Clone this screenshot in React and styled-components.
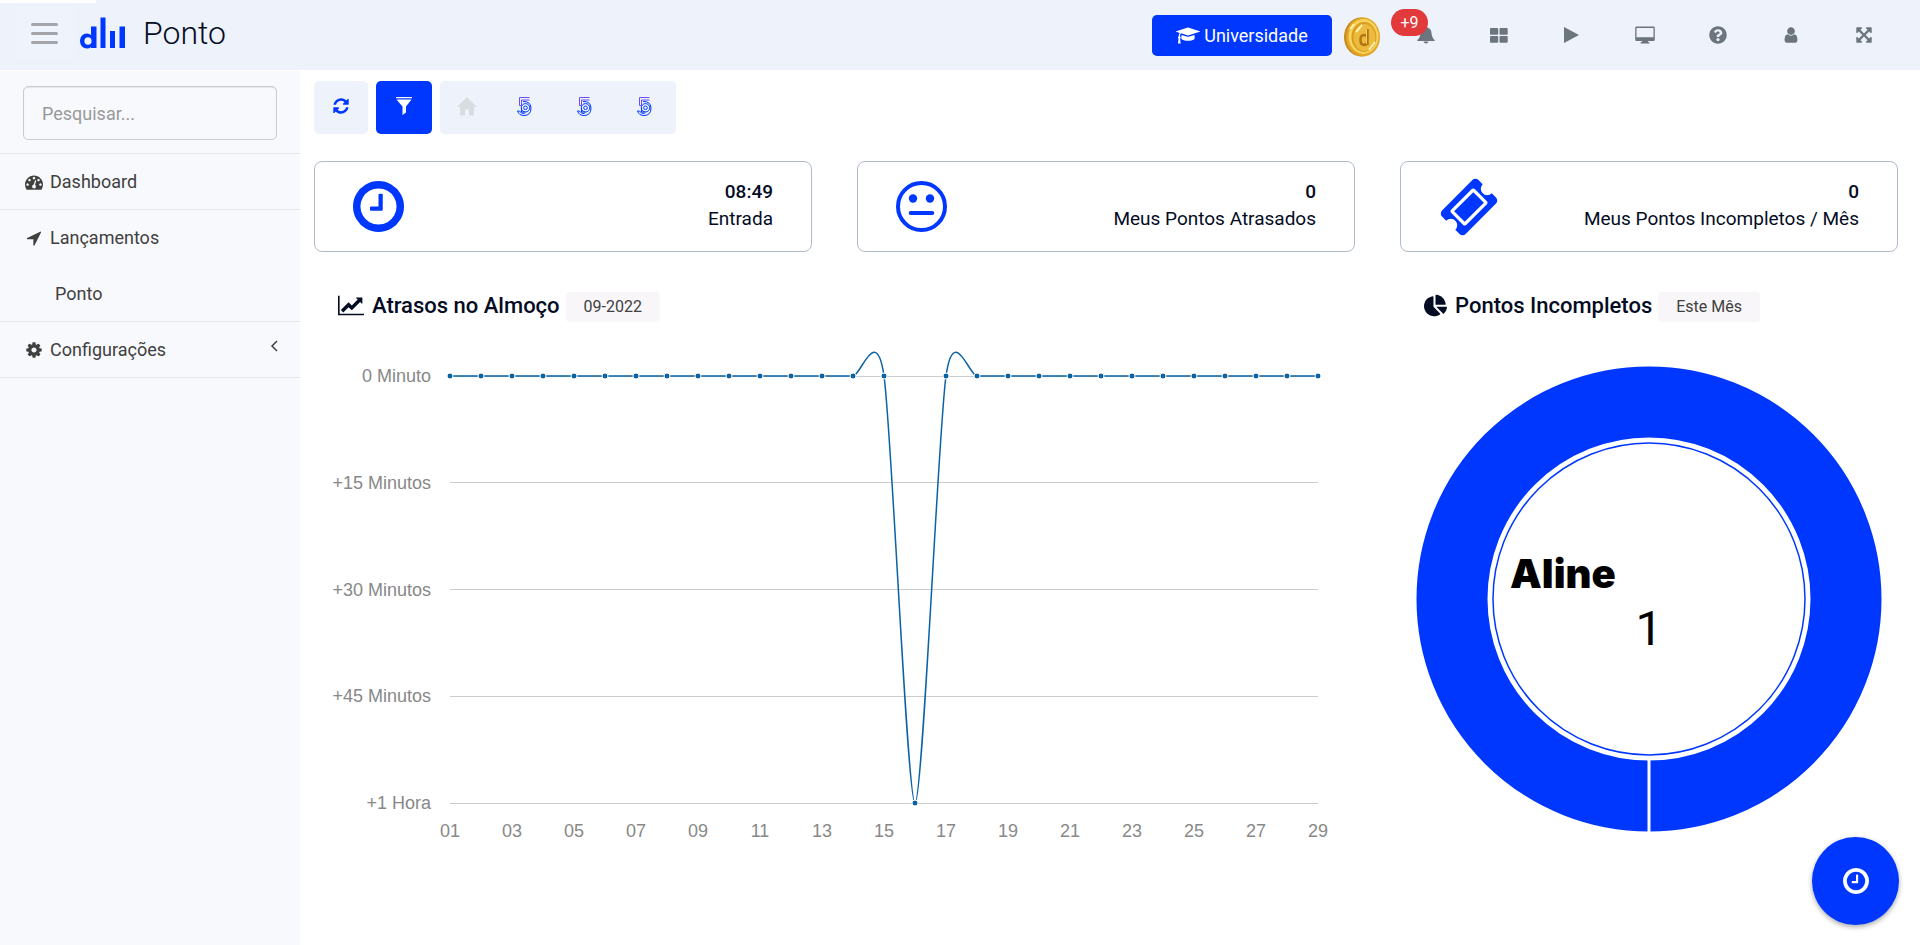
import React from "react"
import styled, { createGlobalStyle, ThemeProvider } from "styled-components"
import { FaChartPie, FaQuestionCircle } from "react-icons/fa"

const theme = {
    fonts: {
        body: "Roboto, \"Open Sans\", sans-serif",
        chart: "\"Liberation Sans\", Arial, sans-serif",
        display: "Inter, \"Liberation Sans\", sans-serif"
    },
    colors: {
        primary: "#0037ff",
        surface: "#edf2fb",
        sidebar: "#f8f9fd",
        text: "#040c24",
        menuText: "#404040",
        muted: "#6c757d",
        danger: "#e23a3a",
        line: "#e3e6ea",
        cardBorder: "#b0bccb",
        chartLine: "#0b62a4",
        chartText: "#888888"
    }
}

const GlobalStyle = createGlobalStyle`
    * {
        box-sizing: border-box;
    }
    body {
        margin: 0;
        background: #ffffff;
        font-family: ${theme.fonts.body};
        font-weight: 400;
        font-size: 18px;
        line-height: 27px;
        color: ${theme.colors.text};
    }
    button, input {
        font: inherit;
    }
    button {
        border: 0;
        padding: 0;
        cursor: pointer;
    }
`

const Page = styled.div`
    display: flex;
    flex-direction: column;
    min-height: 100vh;
`

const Header = styled.header`
    position: relative;
    display: flex;
    align-items: center;
    justify-content: space-between;
    height: 70px;
    padding: 0 20px 0 15px;
    background: ${props => props.theme.colors.surface};
`

const LoadingBar = styled.div`
    position: absolute;
    top: 0;
    left: 0;
    width: 5%;
    height: 3px;
    background: #ffffff;
`

const Brand = styled.div`
    display: flex;
    align-items: center;
    height: 66px;
    align-self: flex-start;
`

const MenuButton = styled.button`
    display: flex;
    flex-direction: column;
    align-items: center;
    justify-content: center;
    gap: 6px;
    width: 59px;
    height: 52px;
    margin-right: 6px;
    background: #eff3fb;
`

const MenuBar = styled.span`
    width: 27px;
    height: 3px;
    border-radius: 2px;
    background: #a3a5ab;
`

const BrandLink = styled.a`
    display: flex;
    align-items: center;
    gap: 17px;
    color: ${props => props.theme.colors.text};
    text-decoration: none;
`

const BrandTitle = styled.h1`
    margin: 0;
    font-size: 32px;
    font-weight: 300;
    line-height: 40px;
`

const HeaderActions = styled.nav`
    display: flex;
    align-items: center;
`

const UniversityButton = styled.button`
    display: flex;
    align-items: center;
    justify-content: center;
    gap: 4px;
    width: 180px;
    height: 41px;
    margin-right: 12px;
    border-radius: 5px;
    background: ${props => props.theme.colors.primary};
    color: #ffffff;
`

const CoinButton = styled.button`
    display: flex;
    margin: 4px 9px 0 0;
    background: none;
`

const ActionButton = styled.button`
    position: relative;
    display: flex;
    align-items: center;
    justify-content: center;
    width: 73px;
    height: 52px;
    background: none;
    color: ${props => props.theme.colors.muted};
`

const Counter = styled.span`
    position: absolute;
    top: 0;
    left: 2px;
    width: 37px;
    height: 27px;
    border-radius: 14px;
    background: ${props => props.theme.colors.danger};
    color: #ffffff;
    font-size: 16px;
    line-height: 27px;
    text-align: center;
`

const Body = styled.div`
    display: flex;
    flex: 1;
    margin-top: 1px;
`

const Sidebar = styled.aside`
    flex: none;
    width: 300px;
    background: ${props => props.theme.colors.sidebar};
`

const SearchForm = styled.form`
    padding: 15px 23px 13px;
    border-bottom: 1px solid ${props => props.theme.colors.line};
`

const SearchInput = styled.input`
    display: block;
    width: 100%;
    height: 54px;
    padding: 0 18px;
    border: 1px solid #cccccc;
    border-radius: 5px;
    background: transparent;
    box-shadow: inset 0 1px 1px rgba(0, 0, 0, 0.08);
    color: ${props => props.theme.colors.menuText};
    &::placeholder {
        color: #999999;
        font-weight: 400;
        opacity: 1;
    }
`

const Menu = styled.ul`
    margin: 0;
    padding: 0;
    list-style: none;
`

const MenuItem = styled.li`
    border-bottom: 1px solid ${props => props.theme.colors.line};
`

const MenuLink = styled.a`
    display: flex;
    align-items: center;
    gap: 7px;
    height: ${props => props.$nested ? 56 : 55}px;
    padding: 0 20px 0 ${props => props.$nested ? 55 : 25}px;
    color: ${props => props.theme.colors.menuText};
    text-decoration: none;
`

const MenuIcon = styled.span`
    display: flex;
    justify-content: center;
    width: 18px;
`

const MenuArrow = styled.span`
    display: flex;
    margin-left: auto;
    padding-bottom: 8px;
`

const Main = styled.main`
    flex: 1;
    min-width: 0;
    padding: 10px 22px 24px 14px;
`

const Toolbar = styled.div`
    display: flex;
    gap: 8px;
`

const ToolButton = styled.button`
    display: flex;
    align-items: center;
    justify-content: center;
    width: ${props => props.$width || 60}px;
    height: 53px;
    padding-bottom: 3px;
    border-radius: 5px;
    background: ${props => props.$primary ? props.theme.colors.primary : props.theme.colors.surface};
    color: ${props => props.$primary ? "#ffffff" : props.theme.colors.primary};
    &:disabled {
        color: #d7dde1;
        cursor: default;
    }
`

const ToolGroup = styled.div`
    display: flex;
    padding-right: 2px;
    border-radius: 5px;
    background: ${props => props.theme.colors.surface};
`

const Columns = styled.div`
    display: grid;
    grid-template-columns: repeat(3, minmax(0, 1fr));
    column-gap: 45px;
    row-gap: 37px;
    margin-top: 27px;
`

const StatCard = styled.section`
    display: flex;
    align-items: center;
    justify-content: space-between;
    height: 91px;
    padding: 0 38px;
    border: 1px solid ${props => props.theme.colors.cardBorder};
    border-radius: 8px;
    color: ${props => props.theme.colors.primary};
`

const StatText = styled.div`
    padding-bottom: 4px;
    color: ${props => props.theme.colors.text};
    font-size: 19px;
    text-align: right;
`

const StatValue = styled.div`
    font-weight: 500;
`

const Panel = styled.section`
    grid-column: span ${props => props.$span || 1};
`

const PanelHeader = styled.header`
    display: flex;
    align-items: center;
    height: 33px;
    margin-bottom: 18px;
    padding-left: 24px;
`

const PanelTitle = styled.h2`
    margin: 0 6px 0 8px;
    font-size: 22px;
    font-weight: 500;
    line-height: 30px;
`

const Period = styled.span`
    align-self: flex-end;
    padding: 0 18px;
    border-radius: 4px;
    background: #f8f6f8;
    color: #404040;
    font-size: 16px;
    line-height: 30px;
`

const ChartSvg = styled.svg`
    display: block;
    width: 100%;
    height: auto;
    font-family: ${props => props.theme.fonts.chart};
    font-size: 18px;
    font-weight: 400;
`

const FloatingButton = styled.button`
    position: fixed;
    right: 21px;
    bottom: 20px;
    display: flex;
    align-items: center;
    justify-content: center;
    width: 87px;
    height: 88px;
    border-radius: 50%;
    background: ${props => props.theme.colors.primary};
    color: #ffffff;
    box-shadow: 0 2px 5px rgba(0, 0, 0, 0.35);
`

const paths = {
    clock: "M1024 544v448q0 14-9 23t-23 9h-320q-14 0-23-9t-9-23v-64q0-14 9-23t23-9h224v-352q0-14 9-23t23-9h64q14 0 23 9t9 23zm416 352q0-148-73-273t-198-198-273-73-273 73-198 198-73 273 73 273 198 198 273 73 273-73 198-198 73-273zm224 0q0 209-103 385.5t-279.5 279.5-385.5 103-385.5-103-279.5-279.5-103-385.5 103-385.5 279.5-279.5 385.5-103 385.5 103 279.5 279.5 103 385.5z",
    cog: "M1152 896q0-106-75-181t-181-75-181 75-75 181 75 181 181 75 181-75 75-181zm512-109v222q0 12-8 23t-20 13l-185 28q-19 54-39 91 35 50 107 138 10 12 10 25t-9 23q-27 37-99 108t-94 71q-12 0-26-9l-138-108q-44 23-91 38-16 136-29 186-7 28-36 28h-222q-14 0-24.5-8.5t-11.5-21.5l-28-184q-49-16-90-37l-141 107q-10 9-25 9-14 0-25-11-126-114-165-168-7-10-7-23 0-12 8-23 15-21 51-66.5t54-70.5q-27-50-41-99l-183-27q-13-2-21-12.5t-8-23.5v-222q0-12 8-23t19-13l186-28q14-46 39-92-40-57-107-138-10-12-10-24 0-10 9-23 26-36 98.5-107.5t94.5-71.5q13 0 26 10l138 107q44-23 91-38 16-136 29-186 7-28 36-28h222q14 0 24.5 8.5t11.5 21.5l28 184q49 16 90 37l142-107q9-9 24-9 13 0 25 10 129 119 165 170 7 8 7 22 0 12-8 23-15 21-51 66.5t-54 70.5q26 50 41 98l183 28q13 2 21 12.5t8 23.5z",
    dashboard: "M384 1152q0-53-37.5-90.5t-90.5-37.5-90.5 37.5-37.5 90.5 37.5 90.5 90.5 37.5 90.5-37.5 37.5-90.5zm192-448q0-53-37.5-90.5t-90.5-37.5-90.5 37.5-37.5 90.5 37.5 90.5 90.5 37.5 90.5-37.5 37.5-90.5zm428 481l101-382q6-26-7.5-48.5t-38.5-29.5-48 6.5-30 39.5l-101 382q-60 5-107 43.5t-63 98.5q-20 77 20 146t117 89 146-20 89-117q16-60-6-117t-72-91zm660-33q0-53-37.5-90.5t-90.5-37.5-90.5 37.5-37.5 90.5 37.5 90.5 90.5 37.5 90.5-37.5 37.5-90.5zm-640-640q0-53-37.5-90.5t-90.5-37.5-90.5 37.5-37.5 90.5 37.5 90.5 90.5 37.5 90.5-37.5 37.5-90.5zm448 192q0-53-37.5-90.5t-90.5-37.5-90.5 37.5-37.5 90.5 37.5 90.5 90.5 37.5 90.5-37.5 37.5-90.5zm320 448q0 261-141 483-19 29-54 29h-1402q-35 0-54-29-141-221-141-483 0-182 71-348t191-286 286-191 348-71 348 71 286 191 191 286 71 348z",
    arrow: "M1593 349l-640 1280q-17 35-57 35-5 0-15-2-22-5-35.5-22.5t-13.5-39.5v-576h-576q-22 0-39.5-13.5t-22.5-35.5 4-42 29-30l1280-640q13-7 29-7 27 0 45 19 15 14 18.5 34.5t-6.5 39.5z",
    refresh: "M1639 1056q0 5-1 7-64 268-268 434.5t-478 166.5q-146 0-282.5-55t-243.5-157l-129 129q-19 19-45 19t-45-19-19-45v-448q0-26 19-45t45-19h448q26 0 45 19t19 45-19 45l-137 137q71 66 161 102t187 36q134 0 250-65t186-179q11-17 53-117 8-23 30-23h192q13 0 22.5 9.5t9.5 22.5zm25-800v448q0 26-19 45t-45 19h-448q-26 0-45-19t-19-45 19-45l138-138q-148-137-349-137-134 0-250 65t-186 179q-11 17-53 117-8 23-30 23h-199q-13 0-22.5-9.5t-9.5-22.5v-7q65-268 270-434.5t480-166.5q146 0 284 55.5t245 156.5l130-129q19-19 45-19t45 19 19 45z",
    ticket: "M1024 452l316 316-572 572-316-316zm-211 979l618-618q19-19 19-45t-19-45l-362-362q-18-18-45-18t-45 18l-618 618q-19 19-19 45t19 45l362 362q18 18 45 18t45-18zm889-637l-907 908q-37 37-90.5 37t-90.5-37l-126-126q56-56 56-136t-56-136-136-56-136 56l-125-126q-37-37-37-90.5t37-90.5l907-906q37-37 90.5-37t90.5 37l125 125q-56 56-56 136t56 136 136 56 136-56l126 125q37 37 37 90.5t-37 90.5z",
    graduation: "M1774 836l18 316q4 69-82 128t-235 93.5-323 34.5-323-34.5-235-93.5-82-128l18-316 574 181q22 7 48 7t48-7zm530-324q0 23-22 31l-1120 352q-4 1-10 1t-10-1l-652-206q-43 34-71 111.5t-34 178.5q63 36 63 109 0 69-58 107l58 433q2 14-8 25-9 11-24 11h-192q-15 0-24-11-10-11-8-25l58-433q-58-38-58-107 0-73 65-111 11-207 98-330l-333-104q-22-8-22-31t22-31l1120-352q4-1 10-1t10 1l1120 352q22 8 22 31z",
    user: "M1536 1399q0 109-62.5 187t-150.5 78h-854q-88 0-150.5-78t-62.5-187q0-85 8.5-160.5t31.5-152 58.5-131 94-89 134.5-34.5q131 128 313 128t313-128q76 0 134.5 34.5t94 89 58.5 131 31.5 152 8.5 160.5zm-256-887q0 159-112.5 271.5t-271.5 112.5-271.5-112.5-112.5-271.5 112.5-271.5 271.5-112.5 271.5 112.5 112.5 271.5z",
    expand: "M1411 541l-355 355 355 355 144-144q29-31 70-14 39 17 39 59v448q0 26-19 45t-45 19h-448q-42 0-59-40-17-39 14-69l144-144-355-355-355 355 144 144q31 30 14 69-17 40-59 40h-448q-26 0-45-19t-19-45v-448q0-42 40-59 39-17 69 14l144 144 355-355-355-355-144 144q-19 19-45 19-12 0-24-5-40-17-40-59v-448q0-26 19-45t45-19h448q42 0 59 40 17 39-14 69l-144 144 355 355 355-355-144-144q-31-30-14-69 17-40 59-40h448q26 0 45 19t19 45v448q0 42-39 59-13 5-25 5-26 0-45-19z",
    lineChart: "M2048 1536v128h-2048v-1536h128v1408h1920zm-128-1248v435q0 21-19.5 29.5t-35.5-7.5l-121-121-633 633q-10 10-23 10t-23-10l-233-233-416 416-192-192 585-585q10-10 23-10t23 10l233 233 464-464-121-121q-16-16-7.5-35.5t29.5-19.5h435q14 0 23 9t9 23z"
}

const Glyph = ({ name, size, box = "0 0 1792 1792" }) => {
    const [, , w, h] = box.split(" ").map(Number)
    return (
        <svg width={Math.round(size * w / h)} height={size} viewBox={box} fill="currentColor" aria-hidden="true">
            <path d={paths[name]}/>
        </svg>
    )
}

const Logo = () => (
    <svg width="46" height="32" viewBox="0 0 46 32" fill={theme.colors.primary} role="img" aria-label="Logo">
        <path fillRule="evenodd" d="M11 9.500h5.500v21.500h-5.500v-1q-1.500 1.500-4 1.500q-3 0-5-2.100t-2-5.400t2-5.400t5-2.100q2.500 0 4 1.500zM8 20.200q-3.600 0-3.600 3.800t3.600 3.800t3.600-3.800t-3.600-3.800z"/>
        <path d="M20.500 0.500h5v30.500h-5zM30 14h5v17h-5zM39.500 9.500h5.500v21.500h-5.500z"/>
    </svg>
)

const Coin = () => (
    <svg width="36" height="40" viewBox="0 0 36 40" aria-hidden="true">
        <ellipse cx="17" cy="20" rx="17" ry="19.500" fill="#c58a1c"/>
        <ellipse cx="19" cy="20" rx="17" ry="19.500" fill="#e2a526"/>
        <ellipse cx="19.500" cy="19.500" rx="15" ry="17.500" fill="#f6d35a"/>
        <ellipse cx="20" cy="20" rx="12.500" ry="15" fill="#d99a22"/>
        <ellipse cx="20.500" cy="20.500" rx="11" ry="13.500" fill="#ecba3c"/>
        <path d="M12 15l6-7M25 33l6-8M6 12l4-5" stroke="#fff2b0" strokeWidth="2"/>
        <path d="M23.500 12v16M23.500 21q-1-3-3.500-3q-3.500 0-3.500 5t3.500 5q2.500 0 3.500-3" fill="none" stroke="#b47414" strokeWidth="2.500"/>
        <path d="M22.500 12v15" stroke="#f3cf5c" strokeWidth="1"/>
    </svg>
)

const Bell = () => (
    <svg width="18" height="18" viewBox="0 0 18 18" fill="currentColor" aria-hidden="true">
        <path d="M9 0q1.300 0 1.300 1.500q3.900 1 4.200 5.500q.2 4.500 3.200 7v.9h-17.400v-.9q3-2.500 3.200-7q.3-4.500 4.200-5.500q0-1.500 1.300-1.500zM6.500 15.500h5q-.5 2-2.500 2t-2.500-2z"/>
    </svg>
)

const Grid = () => (
    <svg width="18" height="15" viewBox="0 0 18 15" fill="currentColor" aria-hidden="true">
        <rect width="8.200" height="6.800" rx="1"/>
        <rect x="9.500" width="8.200" height="6.800" rx="1"/>
        <rect y="8" width="8.200" height="6.800" rx="1"/>
        <rect x="9.500" y="8" width="8.200" height="6.800" rx="1"/>
    </svg>
)

const Play = () => (
    <svg width="15" height="16" viewBox="0 0 15 16" fill="currentColor" aria-hidden="true">
        <path d="M0 0l15 8l-15 8z"/>
    </svg>
)

const Desktop = () => (
    <svg width="20" height="18" viewBox="0 0 20 18" fill="currentColor" aria-hidden="true">
        <path fillRule="evenodd" d="M1.500 0.500h17q1.300 0 1.300 1.300v12q0 1.200-1.300 1.200h-5.500v1h1.300v1.500h-8.600v-1.500h1.300v-1h-5.500q-1.300 0-1.300-1.200v-12q0-1.300 1.300-1.300zM1.500 1.900v9.300h17v-9.300z"/>
    </svg>
)

const Funnel = () => (
    <svg width="16" height="18" viewBox="0 0 16 18" fill="currentColor" aria-hidden="true">
        <path d="M0 0h16v1.300h-16zM0.500 2.500h15l-5.500 7v6l-3.500 2.500v-8.500z"/>
    </svg>
)

const Home = () => (
    <svg width="20" height="19" viewBox="0 0 20 19" fill="currentColor" aria-hidden="true">
        <path d="M10 0l10 10h-3v8.500h-5v-6h-4v6h-5v-8.500h-3z"/>
    </svg>
)

// figure five with concentric outlines
const Five = () => (
    <svg width="15" height="19" viewBox="0 0 15 19" fill="none" stroke="currentColor" aria-hidden="true">
        <path d="M12.500 0.500h-10v8h2v-5.500h8" stroke="#6a4df7"/>
        <path d="M6 4.500q7.500-.5 8 6.500q0 7.500-7 7.500q-5 0-6.500-4.500h2q1.500 3 5 2.500"/>
        <circle cx="8.500" cy="10.800" r="4.200"/>
        <circle cx="8.500" cy="10.800" r="1.800"/>
        <path d="M4.500 10.500v4.500h4"/>
    </svg>
)

const Meh = () => (
    <svg width="51" height="51" viewBox="0 0 51 51" fill="currentColor" aria-hidden="true">
        <circle cx="25.500" cy="25.500" r="23.500" fill="none" stroke="currentColor" strokeWidth="4"/>
        <circle cx="17" cy="17.500" r="4.200"/>
        <circle cx="34" cy="17.500" r="4.200"/>
        <rect x="12.700" y="30" width="25.600" height="4" rx="2"/>
    </svg>
)

const stats = [
    { icon: <Glyph name="clock" size={51} box="128 128 1536 1536"/>, value: "08:49", label: "Entrada" },
    { icon: <Meh/>, value: "0", label: "Meus Pontos Atrasados" },
    { icon: <Glyph name="ticket" size={60}/>, value: "0", label: "Meus Pontos Incompletos / Mês" }
]

const actions = [
    { label: "Módulos", icon: <Grid/> },
    { label: "Reproduzir", icon: <Play/> },
    { label: "Tela", icon: <Desktop/> },
    { label: "Ajuda", icon: <FaQuestionCircle size={18}/> },
    { label: "Usuário", icon: <Glyph name="user" size={18}/> },
    { label: "Tela cheia", icon: <Glyph name="expand" size={18}/> }
]

const delays = Array.from({ length: 29 }, (_, i) => i === 15 ? 60 : 0)
const ticks = ["0 Minuto", "+15 Minutos", "+30 Minutos", "+45 Minutos", "+1 Hora"]

const plot = { left: 136, top: 36, width: 868, height: 427 }
const stepX = plot.width / (delays.length - 1)
const pointAt = i => [plot.left + i * stepX, plot.top + delays[i] / 60 * plot.height]

const smoothPath = () => {
    const last = delays.length - 1
    const tangent = i => {
        const [x0, y0] = pointAt(Math.max(i - 1, 0))
        const [x1, y1] = pointAt(Math.min(i + 1, last))
        return [(x1 - x0) / 8, (y1 - y0) / 8]
    }
    return delays.map((_, i) => {
        const [x, y] = pointAt(i)
        if (i === 0) return `M${x} ${y}`
        const [px, py] = pointAt(i - 1)
        const [ax, ay] = tangent(i - 1)
        const [bx, by] = tangent(i)
        return `C${px + ax} ${py + ay} ${x - bx} ${y - by} ${x} ${y}`
    }).join("")
}

const DelayChart = () => (
    <ChartSvg viewBox="0 0 1041 520" role="img" aria-label="Atrasos no Almoço">
        {ticks.map((tick, i) => {
            const y = plot.top + i * plot.height / 4
            return (
                <g key={tick}>
                    <line x1={plot.left} x2={plot.left + plot.width} y1={y} y2={y} stroke="#cccccc" shapeRendering="crispEdges"/>
                    <text x="117" y={y + 6} textAnchor="end" fill={theme.colors.chartText}>{tick}</text>
                </g>
            )
        })}
        <path d={smoothPath()} fill="none" stroke={theme.colors.chartLine} strokeWidth="1.5"/>
        {delays.map((_, i) => {
            const [x, y] = pointAt(i)
            return <circle key={i} cx={x} cy={y} r="3" fill={theme.colors.chartLine} stroke="#ffffff"/>
        })}
        {delays.map((_, i) => i % 2 === 0 && (
            <text key={i} x={pointAt(i)[0]} y="497" textAnchor="middle" fill={theme.colors.chartText}>
                {String(i + 1).padStart(2, "0")}
            </text>
        ))}
    </ChartSvg>
)

const DonutChart = () => (
    <ChartSvg viewBox="0 0 498 520" role="img" aria-label="Pontos Incompletos">
        <circle cx="249" cy="259" r="197" fill="none" stroke={theme.colors.primary} strokeWidth="71"/>
        <circle cx="249" cy="259" r="156" fill="none" stroke={theme.colors.primary} strokeWidth="1.5"/>
        <line x1="249" x2="249" y1="419" y2="495" stroke="#ffffff" strokeWidth="3"/>
        <text x="110" y="248" fontFamily={theme.fonts.display} fontSize="40" fontWeight="900" fill="#000000">Aline</text>
        <text x="249" y="305" textAnchor="middle" fontFamily={theme.fonts.body} fontSize="48" fill="#000000">1</text>
    </ChartSvg>
)

const App = () => (
    <ThemeProvider theme={theme}>
        <GlobalStyle/>
        <Page>
            <Header>
                <LoadingBar/>
                <Brand>
                    <MenuButton type="button" aria-label="Menu">
                        <MenuBar/>
                        <MenuBar/>
                        <MenuBar/>
                    </MenuButton>
                    <BrandLink href="#">
                        <Logo/>
                        <BrandTitle>Ponto</BrandTitle>
                    </BrandLink>
                </Brand>
                <HeaderActions>
                    <UniversityButton type="button">
                        <Glyph name="graduation" size={19} box="0 0 2304 1792"/>
                        Universidade
                    </UniversityButton>
                    <CoinButton type="button" aria-label="Moedas"><Coin/></CoinButton>
                    <ActionButton type="button" aria-label="Notificações">
                        <Bell/>
                        <Counter>+9</Counter>
                    </ActionButton>
                    {actions.map(action => (
                        <ActionButton key={action.label} type="button" aria-label={action.label}>
                            {action.icon}
                        </ActionButton>
                    ))}
                </HeaderActions>
            </Header>
            <Body>
                <Sidebar>
                    <SearchForm>
                        <SearchInput type="text" placeholder="Pesquisar..." aria-label="Pesquisar"/>
                    </SearchForm>
                    <Menu>
                        <MenuItem>
                            <MenuLink href="#">
                                <MenuIcon><Glyph name="dashboard" size={18}/></MenuIcon>
                                Dashboard
                            </MenuLink>
                        </MenuItem>
                        <MenuItem>
                            <MenuLink href="#">
                                <MenuIcon><Glyph name="arrow" size={18}/></MenuIcon>
                                Lançamentos
                            </MenuLink>
                            <MenuLink href="#" $nested>Ponto</MenuLink>
                        </MenuItem>
                        <MenuItem>
                            <MenuLink href="#">
                                <MenuIcon><Glyph name="cog" size={18}/></MenuIcon>
                                Configurações
                                <MenuArrow>
                                    <svg width="10" height="12" viewBox="0 0 10 12" fill="none" stroke="currentColor" strokeWidth="1.5" aria-hidden="true">
                                        <path d="M7 1l-5 5l5 5"/>
                                    </svg>
                                </MenuArrow>
                            </MenuLink>
                        </MenuItem>
                    </Menu>
                </Sidebar>
                <Main>
                    <Toolbar>
                        <ToolButton type="button" $width={54} aria-label="Atualizar"><Glyph name="refresh" size={18}/></ToolButton>
                        <ToolButton type="button" $width={56} $primary aria-label="Filtrar"><Funnel/></ToolButton>
                        <ToolGroup>
                            <ToolButton type="button" $width={54} disabled aria-label="Início"><Home/></ToolButton>
                            <ToolButton type="button" aria-label="Painel 1"><Five/></ToolButton>
                            <ToolButton type="button" aria-label="Painel 2"><Five/></ToolButton>
                            <ToolButton type="button" aria-label="Painel 3"><Five/></ToolButton>
                        </ToolGroup>
                    </Toolbar>
                    <Columns>
                        {stats.map(stat => (
                            <StatCard key={stat.label}>
                                {stat.icon}
                                <StatText>
                                    <StatValue>{stat.value}</StatValue>
                                    <div>{stat.label}</div>
                                </StatText>
                            </StatCard>
                        ))}
                        <Panel $span={2}>
                            <PanelHeader>
                                <Glyph name="lineChart" size={23} box="0 0 2048 1792"/>
                                <PanelTitle>Atrasos no Almoço</PanelTitle>
                                <Period>09-2022</Period>
                            </PanelHeader>
                            <DelayChart/>
                        </Panel>
                        <Panel>
                            <PanelHeader>
                                <FaChartPie size={23}/>
                                <PanelTitle>Pontos Incompletos</PanelTitle>
                                <Period>Este Mês</Period>
                            </PanelHeader>
                            <DonutChart/>
                        </Panel>
                    </Columns>
                </Main>
            </Body>
            <FloatingButton type="button" aria-label="Registrar ponto">
                <Glyph name="clock" size={26} box="128 128 1536 1536"/>
            </FloatingButton>
        </Page>
    </ThemeProvider>
)

export default App
